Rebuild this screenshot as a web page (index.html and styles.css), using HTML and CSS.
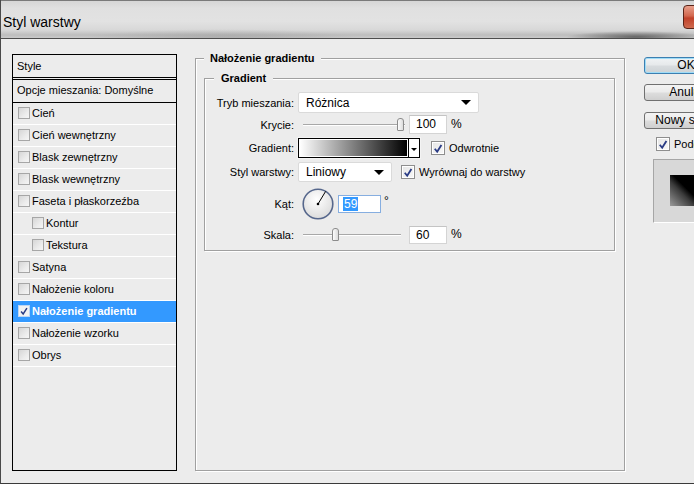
FILE: index.html
```html
<!DOCTYPE html>
<html lang="pl">
<head>
<meta charset="utf-8">
<title>Styl warstwy</title>
<link rel="stylesheet" href="styles.css">
</head>
<body>
<div class="window">
  <div class="titlebar">
    <span class="title">Styl warstwy</span>
    <span class="close"></span>
  </div>
  <div class="content">
    <div class="styles-panel">
      <div class="sp-head">Style</div>
      <div class="sp-blend">Opcje mieszania: Domyślne</div>
      <div class="sp-item"><span class="cb"></span><span class="sp-text">Cień</span></div>
      <div class="sp-item"><span class="cb"></span><span class="sp-text">Cień wewnętrzny</span></div>
      <div class="sp-item"><span class="cb"></span><span class="sp-text">Blask zewnętrzny</span></div>
      <div class="sp-item"><span class="cb"></span><span class="sp-text">Blask wewnętrzny</span></div>
      <div class="sp-item"><span class="cb"></span><span class="sp-text">Faseta i płaskorzeźba</span></div>
      <div class="sp-item sub"><span class="cb"></span><span class="sp-text">Kontur</span></div>
      <div class="sp-item sub"><span class="cb"></span><span class="sp-text">Tekstura</span></div>
      <div class="sp-item"><span class="cb"></span><span class="sp-text">Satyna</span></div>
      <div class="sp-item"><span class="cb"></span><span class="sp-text">Nałożenie koloru</span></div>
      <div class="sp-item selected"><span class="cb checked"><svg viewBox="0 0 12 12" width="12" height="12"><path d="M2.5 6.5 L5 9.5 L9.5 2.5" fill="none" stroke="#2a3c85" stroke-width="1.8"/></svg></span><span class="sp-text">Nałożenie gradientu</span></div>
      <div class="sp-item"><span class="cb"></span><span class="sp-text">Nałożenie wzorku</span></div>
      <div class="sp-item"><span class="cb"></span><span class="sp-text">Obrys</span></div>
    </div>

    <div class="main">
      <div class="group outer">
        <div class="group-title outer-title">Nałożenie gradientu</div>
        <div class="group inner">
          <div class="group-title inner-title">Gradient</div>
          <div class="form">
            <div class="row r1">
              <span class="label">Tryb mieszania:</span>
              <div class="select sel-blend"><span>Różnica</span><span class="tri"></span></div>
            </div>
            <div class="row r2">
              <span class="label">Krycie:</span>
              <div class="slider s-opacity"><span class="track"></span><span class="thumb"></span></div>
              <div class="input">100</div>
              <span class="unit">%</span>
            </div>
            <div class="row r3">
              <span class="label">Gradient:</span>
              <div class="gradbox"><span class="grad"></span><span class="gradarrow"><span class="tri small"></span></span></div>
              <span class="cb big checked"><svg viewBox="0 0 13 13" width="13" height="13"><path d="M3 6.8 L5.6 10 L10.2 2.6" fill="none" stroke="#2a3c85" stroke-width="2"/></svg></span>
              <span class="cb-label">Odwrotnie</span>
            </div>
            <div class="row r4">
              <span class="label">Styl warstwy:</span>
              <div class="select sel-style"><span>Liniowy</span><span class="tri"></span></div>
              <span class="cb big checked cb-align"><svg viewBox="0 0 13 13" width="13" height="13"><path d="M3 6.8 L5.6 10 L10.2 2.6" fill="none" stroke="#2a3c85" stroke-width="2"/></svg></span>
              <span class="cb-label">Wyrównaj do warstwy</span>
            </div>
            <div class="row r5">
              <span class="label">Kąt:</span>
              <svg class="dial" viewBox="0 0 32 32" width="32" height="32">
                <defs>
                  <radialGradient id="dg" cx="45%" cy="35%" r="70%">
                    <stop offset="0" stop-color="#ffffff"/>
                    <stop offset="1" stop-color="#d9d9d9"/>
                  </radialGradient>
                </defs>
                <circle cx="16" cy="16" r="14.8" fill="url(#dg)" stroke="#56678c" stroke-width="1.6"/>
                <line x1="16" y1="16" x2="23.6" y2="3.4" stroke="#000" stroke-width="1"/>
                <circle cx="16" cy="16" r="1.3" fill="#000"/>
              </svg>
              <div class="input focused"><span class="hl">59</span></div>
              <span class="deg">°</span>
            </div>
            <div class="row r6">
              <span class="label">Skala:</span>
              <div class="slider s-scale"><span class="track"></span><span class="thumb"></span></div>
              <div class="input">60</div>
              <span class="unit">%</span>
            </div>
          </div>
        </div>
      </div>
    </div>

    <div class="buttons">
      <div class="btn default">OK</div>
      <div class="btn">Anuluj</div>
      <div class="btn">Nowy styl...</div>
      <div class="preview-check">
        <span class="cb big checked"><svg viewBox="0 0 13 13" width="13" height="13"><path d="M3 6.8 L5.6 10 L10.2 2.6" fill="none" stroke="#2a3c85" stroke-width="2"/></svg></span>
        <span class="cb-label">Podgląd</span>
      </div>
      <div class="preview"><span class="swatch"></span></div>
    </div>
  </div>
</div>
</body>
</html>
```

FILE: styles.css
```css
* { box-sizing: border-box; }

html, body {
  margin: 0;
  padding: 0;
  width: 694px;
  height: 484px;
  overflow: hidden;
  background: #ececec;
  font-family: "Liberation Sans", Arial, sans-serif;
  font-size: 11px;
  color: #000;
}

.window {
  width: 694px;
  height: 484px;
  border-left: 1px solid #4a4a4a;
  border-bottom: 1px solid #3a3a3a;
  display: flex;
  flex-direction: column;
  overflow: hidden;
}

/* ---------- title bar ---------- */
.titlebar {
  height: 39px;
  flex-shrink: 0;
  display: flex;
  align-items: flex-start;
  border-top: 1px solid #7a7a7a;
  border-bottom: 1px solid #4d4d4d;
  background:
    radial-gradient(ellipse 70px 6px at 635px 36px, rgba(60,60,60,0.7), rgba(60,60,60,0) 100%),
    radial-gradient(ellipse 140px 10px at 220px 38px, rgba(110,110,110,0.3), rgba(110,110,110,0) 100%),
    linear-gradient(to bottom, #d6d6d6 0%, #e0e0e0 20%, #e2e2e2 55%, #d8d8d8 78%, #bdbdbd 92%, #cacaca 100%);
}
.title {
  flex: 1;
  padding: 12px 0 0 2px;
  font-size: 14px;
  line-height: 18px;
  color: #000;
}
.close {
  width: 43px;
  height: 24px;
  margin-top: 4px;
  margin-right: -32px;
  flex-shrink: 0;
  border: 1px solid #5a2418;
  border-radius: 4px;
  background: linear-gradient(to bottom, #e8a08c 0%, #d2674e 45%, #c0412a 55%, #cf6a4e 100%);
}

/* ---------- content ---------- */
.content {
  flex: 1;
  display: flex;
  align-items: flex-start;
  padding: 15px 0 0 11px;
  background: #ececec;
}

/* ---------- styles panel ---------- */
.styles-panel {
  width: 165px;
  height: 417px;
  flex-shrink: 0;
  border: 1px solid #000;
  background: #ececec;
}
.sp-head {
  height: 25px;
  line-height: 22px;
  padding-left: 4px;
  border-bottom: 3px double #000;
}
.sp-blend {
  height: 23px;
  line-height: 20px;
  padding-left: 4px;
  border-bottom: 1px solid #000;
}
.sp-item {
  height: 22px;
  display: flex;
  align-items: center;
  padding-left: 5px;
  border-bottom: 1px solid #fff;
  padding-bottom: 2px;
}
.sp-item.sub { padding-left: 19px; }
.sp-text { margin-left: 2px; }
.sp-item.selected {
  background: #3399ff;
  color: #fff;
  font-weight: bold;
}

/* checkboxes */
.cb {
  width: 12px;
  height: 12px;
  flex-shrink: 0;
  border: 1px solid #a6a6a6;
  background: linear-gradient(135deg, #d6d6d6 0%, #ebebeb 60%, #f6f6f6 100%);
  display: flex;
  align-items: center;
  justify-content: center;
}
.cb svg { display: block; }
.cb.checked {
  background: linear-gradient(135deg, #e6e6e6 0%, #f8f8f8 100%);
  border-color: #8e8e8e;
}
.sp-item.selected .cb.checked {
  background: #f2f2f2;
  border-color: #bcd6f5;
}
.cb.big {
  width: 14px;
  height: 14px;
  box-shadow: inset 0 0 0 1px #fff;
}

/* ---------- main group area ---------- */
.main {
  margin-left: 18px;
  margin-top: 4px;
}
.group {
  border: 1px solid #a0a0a0;
  box-shadow: inset 1px 1px 0 #fff, 1px 1px 0 #fff;
}
.outer {
  width: 430px;
  height: 413px;
  padding: 0 9px 0 8px;
}
.group-title {
  width: fit-content;
  background: #ececec;
  font-weight: bold;
  line-height: 13px;
  margin-top: -7px;
}
.outer-title { padding: 0 6px; }
.inner {
  margin-top: 13px;
  padding: 0 0 6px 0;
}
.inner-title {
  margin-left: 9px;
  padding: 0 7px;
}

.form {
  display: flex;
  flex-direction: column;
  margin-top: 7px;
}
.row {
  display: flex;
  align-items: center;
}
.label {
  width: 89px;
  text-align: right;
  margin-right: 4px;
  flex-shrink: 0;
}
.r1 { height: 21px; }
.r2 { height: 19px; margin-top: 2px; }
.r3 { height: 20px; margin-top: 4px; }
.r4 { height: 20px; margin-top: 4px; }
.r5 { height: 33px; margin-top: 5px; }
.r6 { height: 18px; margin-top: 6px; }

/* select */
.select {
  height: 21px;
  background: #fff;
  border: 1px solid #dadada;
  border-radius: 2px;
  display: flex;
  align-items: center;
  justify-content: space-between;
  padding: 0 7px 0 7px;
  font-size: 12px;
}
.sel-blend { width: 181px; }
.sel-style { width: 94px; height: 20px; }
.tri {
  width: 0;
  height: 0;
  border-left: 5px solid transparent;
  border-right: 5px solid transparent;
  border-top: 5px solid #000;
}
.tri.small {
  border-left-width: 3px;
  border-right-width: 3px;
  border-top-width: 3px;
}

/* slider */
.slider {
  width: 111px;
  height: 19px;
  display: flex;
  align-items: center;
  padding: 0 4px 0 5px;
  position: relative;
}
.track {
  flex: 1;
  height: 2px;
  border-top: 1px solid #a8a8a8;
  border-bottom: 1px solid #fff;
}
.thumb {
  position: absolute;
  top: 3px;
  width: 7px;
  height: 13px;
  border: 1px solid #8c8c8c;
  border-radius: 3px 3px 1px 1px;
  background: linear-gradient(to right, #fdfdfd, #dcdcdc);
}
.s-opacity .thumb { left: 99px; }
.s-scale .thumb { left: 34px; top: 2px; }
.s-scale { height: 18px; padding-right: 8px; }

/* text inputs */
.input {
  width: 38px;
  height: 19px;
  background: #fff;
  border: 1px solid #d4d4d4;
  border-top-color: #c4c4c4;
  padding-left: 6px;
  font-size: 12px;
  line-height: 17px;
}
.r6 .input { height: 18px; line-height: 16px; }
.unit {
  margin-left: 4px;
  font-size: 12px;
  margin-top: -2px;
}

/* gradient box */
.gradbox {
  width: 122px;
  height: 20px;
  border: 1px solid #000;
  display: flex;
  background: #fff;
  box-shadow: 0 0 0 1px #f4f4f4;
}
.grad {
  flex: 1;
  margin: 1px;
  background: linear-gradient(to right, #ffffff 0%, #7f7f7f 50%, #000 100%);
}
.gradarrow {
  width: 11px;
  border-left: 1px solid #000;
  display: flex;
  align-items: center;
  justify-content: center;
  padding-top: 2px;
}
.r3 .cb { margin-left: 11px; }
.cb-align { margin-left: 9px; }
.cb-label { margin-left: 4px; }

/* dial */
.dial {
  display: block;
  margin-left: 4px;
  flex-shrink: 0;
}
.input.focused {
  margin-left: 4px;
  width: 43px;
  height: 18px;
  border-color: #86aee0;
  padding-left: 4px;
  line-height: 16px;
  display: flex;
  align-items: center;
}
.hl {
  background: #3399ff;
  color: #fff;
  line-height: 14px;
  padding: 0 1px;
}
.deg {
  align-self: flex-start;
  margin-top: 7px;
  margin-left: 3px;
  font-size: 12px;
}

/* ---------- buttons ---------- */
.buttons {
  margin-left: 19px;
  margin-top: 3px;
  display: flex;
  flex-direction: column;
  width: 84px;
  flex-shrink: 0;
}
.btn {
  width: 84px;
  height: 17px;
  border: 1px solid #707070;
  border-radius: 3px;
  background: linear-gradient(to bottom, #f3f3f3 0%, #ebebeb 48%, #dddddd 52%, #cfcfcf 100%);
  text-align: center;
  line-height: 15px;
  font-size: 12px;
  margin-bottom: 10px;
}
.btn.default {
  border-color: #3c7fb1;
  box-shadow: inset 0 0 0 1px #9fdcf7;
  background: linear-gradient(to bottom, #f0f3f5 0%, #e6e9eb 48%, #d8dcdf 52%, #cdd2d5 100%);
  margin-bottom: 10px;
}
.btn + .btn { margin-bottom: 11px; }
.btn.default + .btn { margin-bottom: 11px; }
.preview-check {
  display: flex;
  align-items: center;
  margin-left: 12px;
  margin-top: -3px;
  height: 14px;
}
.preview {
  margin-left: 9px;
  margin-top: 8px;
  width: 66px;
  height: 64px;
  border: 1px solid #a6a6a6;
  border-right-color: #fff;
  border-bottom-color: #fff;
  background: #d8d8d8;
  padding: 15px 0 0 16px;
}
.swatch {
  display: block;
  width: 31px;
  height: 31px;
  background: linear-gradient(to bottom left, #000 45%, #3a3a3a 60%, #9a9a9a 100%);
}
```
